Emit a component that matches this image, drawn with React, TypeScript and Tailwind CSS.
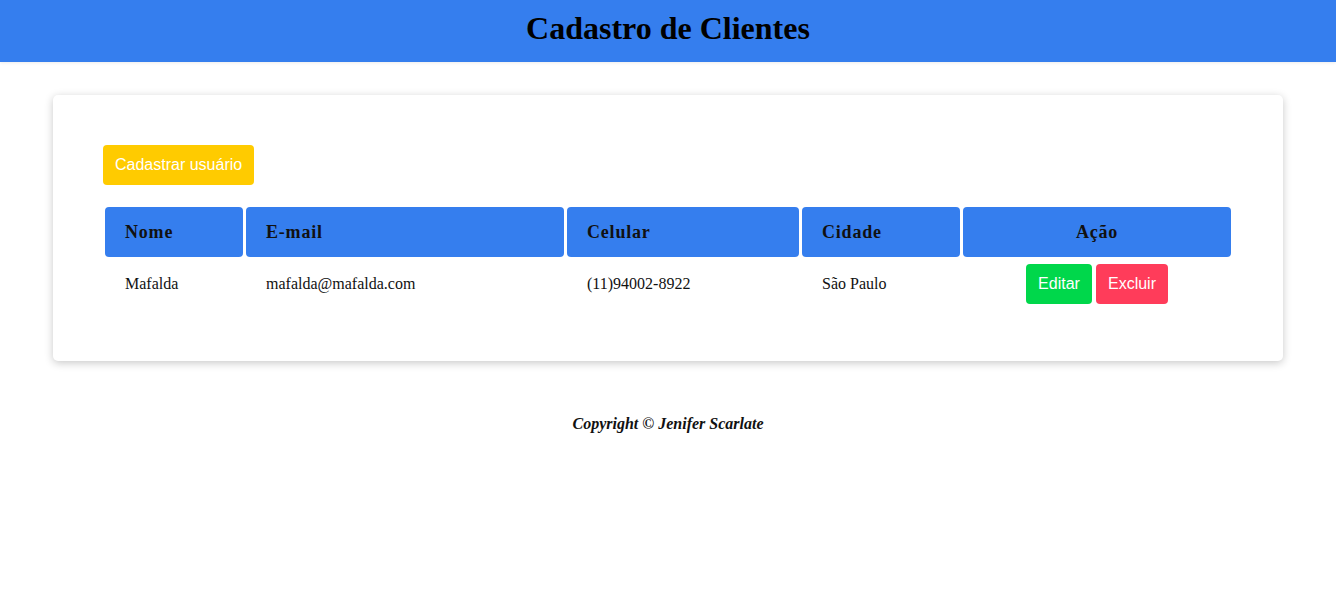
export default function App() {
  const serif = { fontFamily: '"Liberation Serif", "Times New Roman", serif' };
  return (
    <div className="min-h-[609px] bg-white" style={serif}>
      <header className="h-[62px] bg-[#357eee] flex items-center justify-center pb-[6px] shadow-[0_1px_3px_rgba(0,0,0,0.08)]">
        <h1 className="text-[32px] font-bold text-black leading-none">Cadastro de Clientes</h1>
      </header>
      <main className="px-[53px] pt-[33px]">
        <div className="rounded-[5px] bg-white shadow-[0_2px_8px_rgba(0,0,0,0.22)] px-[50px] pt-[50px] pb-[50px]">
          <button
            className="h-[40px] px-[12px] rounded-[4px] bg-[#ffcb00] text-white text-[16px]"
            style={{ fontFamily: '"Liberation Sans", Arial, sans-serif' }}
          >
            Cadastrar usuário
          </button>
          <table className="mt-[19px] w-[1132px] table-fixed border-separate border-spacing-x-[3px] border-spacing-y-[3px] -ml-[1px]">
            <thead>
              <tr className="h-[50px]">
                <th className="w-[138px] bg-[#357eee] rounded-[4px] text-left pl-[20px] text-[18px] font-bold tracking-[0.8px] text-[#111]">Nome</th>
                <th className="w-[318px] bg-[#357eee] rounded-[4px] text-left pl-[20px] text-[18px] font-bold tracking-[0.8px] text-[#111]">E-mail</th>
                <th className="w-[232px] bg-[#357eee] rounded-[4px] text-left pl-[20px] text-[18px] font-bold tracking-[0.8px] text-[#111]">Celular</th>
                <th className="w-[158px] bg-[#357eee] rounded-[4px] text-left pl-[20px] text-[18px] font-bold tracking-[0.8px] text-[#111]">Cidade</th>
                <th className="w-[268px] bg-[#357eee] rounded-[4px] text-center text-[18px] font-bold tracking-[0.8px] text-[#111]">Ação</th>
              </tr>
            </thead>
            <tbody>
              <tr className="text-[16px] text-[#111]">
                <td className="pl-[20px] py-[4px]">Mafalda</td>
                <td className="pl-[20px] py-[4px]">mafalda@mafalda.com</td>
                <td className="pl-[20px] py-[4px]">(11)94002-8922</td>
                <td className="pl-[20px] py-[4px]">São Paulo</td>
                <td className="py-[4px] text-center">
                  <div className="flex justify-center gap-[4px]" style={{ fontFamily: '"Liberation Sans", Arial, sans-serif' }}>
                    <button className="h-[40px] w-[66px] rounded-[4px] bg-[#00d74b] text-white text-[16px]">Editar</button>
                    <button className="h-[40px] w-[72px] rounded-[4px] bg-[#ff3c5a] text-white text-[16px]">Excluir</button>
                  </div>
                </td>
              </tr>
            </tbody>
          </table>
        </div>
      </main>
      <footer className="mt-[51px] text-center">
        <p className="text-[16px] italic font-bold text-[#111]">Copyright © Jenifer Scarlate</p>
      </footer>
    </div>
  );
}
